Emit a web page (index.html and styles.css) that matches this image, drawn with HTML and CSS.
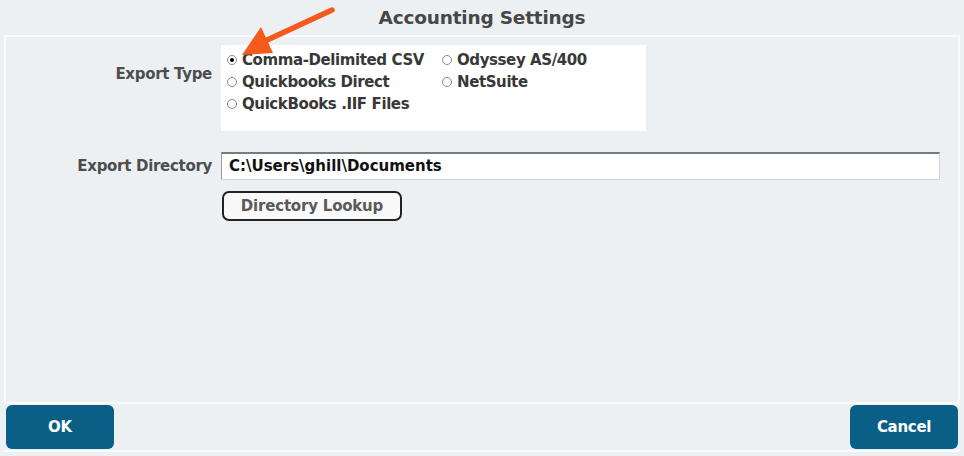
FILE: index.html
```html
<!DOCTYPE html>
<html>
<head>
<meta charset="utf-8">
<link rel="stylesheet" href="styles.css">
</head>
<body>
<div class="page">
  <h1 class="title">Accounting Settings</h1>
  <div class="panel">
    <div class="row row-type">
      <div class="label label-type">Export Type</div>
      <div class="radio-box">
        <label class="opt"><span class="radio checked"></span>Comma-Delimited CSV</label>
        <label class="opt"><span class="radio"></span>Quickbooks Direct</label>
        <label class="opt"><span class="radio"></span>QuickBooks .IIF Files</label>
        <label class="opt"><span class="radio"></span>Odyssey AS/400</label>
        <label class="opt"><span class="radio"></span>NetSuite</label>
      </div>
    </div>
    <div class="row row-dir">
      <div class="label">Export Directory</div>
      <div class="path-input">C:\Users\ghill\Documents</div>
    </div>
    <div class="row row-btn">
      <div class="label"></div>
      <button class="lookup">Directory Lookup</button>
    </div>
  </div>
  <div class="footer">
    <button class="action">OK</button>
    <button class="action">Cancel</button>
  </div>
  <svg class="arrow" width="105" height="60" viewBox="0 0 105 60">
    <line x1="97" y1="10" x2="30" y2="41" stroke="#f35a1c" stroke-width="5.5" stroke-linecap="round"/>
    <polygon points="7,55 26,27 38,53" fill="#f35a1c"/>
  </svg>
</div>
</body>
</html>
```

FILE: styles.css
```css
html, body {
  margin: 0;
  padding: 0;
}
body {
  background: #edf0f3;
  font-family: "DejaVu Sans", Verdana, sans-serif;
  width: 964px;
  height: 456px;
  overflow: hidden;
}
.page {
  position: relative;
  height: 456px;
}
.title {
  margin: 0;
  height: 35px;
  line-height: 35px;
  text-align: center;
  font-size: 18.5px;
  font-weight: bold;
  color: #474747;
  letter-spacing: -0.2px;
}
.panel {
  margin: 0 4px;
  border: 2px solid #fafbfc;
  border-bottom: none;
  box-sizing: content-box;
  padding-top: 8px;
  height: 357px;
}
.row {
  display: flex;
  align-items: center;
}
.label {
  width: 206px;
  text-align: right;
  padding-right: 9px;
  flex: none;
  font-size: 15px;
  font-weight: bold;
  color: #4d4d4d;
  letter-spacing: -0.3px;
}
.row-type {
  align-items: flex-start;
}
.label-type {
  margin-top: 20px;
}
.radio-box {
  width: 425px;
  height: 86px;
  background: #fff;
  box-sizing: border-box;
  padding: 4px 0 0 6px;
  display: grid;
  grid-template-rows: 22px 22px 22px;
  grid-template-columns: 215px auto;
  grid-auto-flow: column;
}
.opt {
  display: flex;
  align-items: center;
  font-size: 15px;
  font-weight: bold;
  color: #383838;
  letter-spacing: -0.4px;
  white-space: nowrap;
}
.radio {
  width: 8px;
  height: 8px;
  border: 1px solid #8a8a8a;
  border-radius: 50%;
  margin-right: 5px;
  flex: none;
  position: relative;
  background: #fff;
}
.radio.checked::after {
  content: "";
  position: absolute;
  left: 2px;
  top: 2px;
  width: 4px;
  height: 4px;
  border-radius: 50%;
  background: #000;
}
.row-dir {
  margin-top: 21px;
}
.path-input {
  width: 719px;
  height: 28px;
  box-sizing: border-box;
  background: #fff;
  border: 1px solid #d6d6d6;
  border-top: 2px solid #7a7a7a;
  border-left: 1px solid #9a9a9a;
  padding-left: 7px;
  line-height: 25px;
  font-size: 15px;
  font-weight: bold;
  color: #111;
  letter-spacing: 0;
}
.row-btn {
  margin-top: 11px;
}
.lookup {
  margin-left: 1px;
  width: 180px;
  height: 30px;
  border: 2px solid #222;
  border-radius: 7px;
  background: #f9f9f9;
  font-family: "DejaVu Sans", Verdana, sans-serif;
  font-size: 15px;
  font-weight: bold;
  color: #5a5a5a;
  letter-spacing: -0.2px;
  padding: 0;
}
.footer {
  margin: 0 4px;
  height: 46px;
  border-top: 2px solid #fafbfc;
  border-bottom: 2px solid #fafbfc;
  display: flex;
  justify-content: space-between;
  align-items: center;
  padding: 0 2px;
}
.action {
  width: 108px;
  height: 44px;
  border: none;
  border-radius: 6px;
  background: #0a5f87;
  color: #fff;
  font-family: "DejaVu Sans", Verdana, sans-serif;
  font-size: 15px;
  font-weight: bold;
  letter-spacing: -0.3px;
}
.arrow {
  position: absolute;
  left: 235px;
  top: 0;
}
```
